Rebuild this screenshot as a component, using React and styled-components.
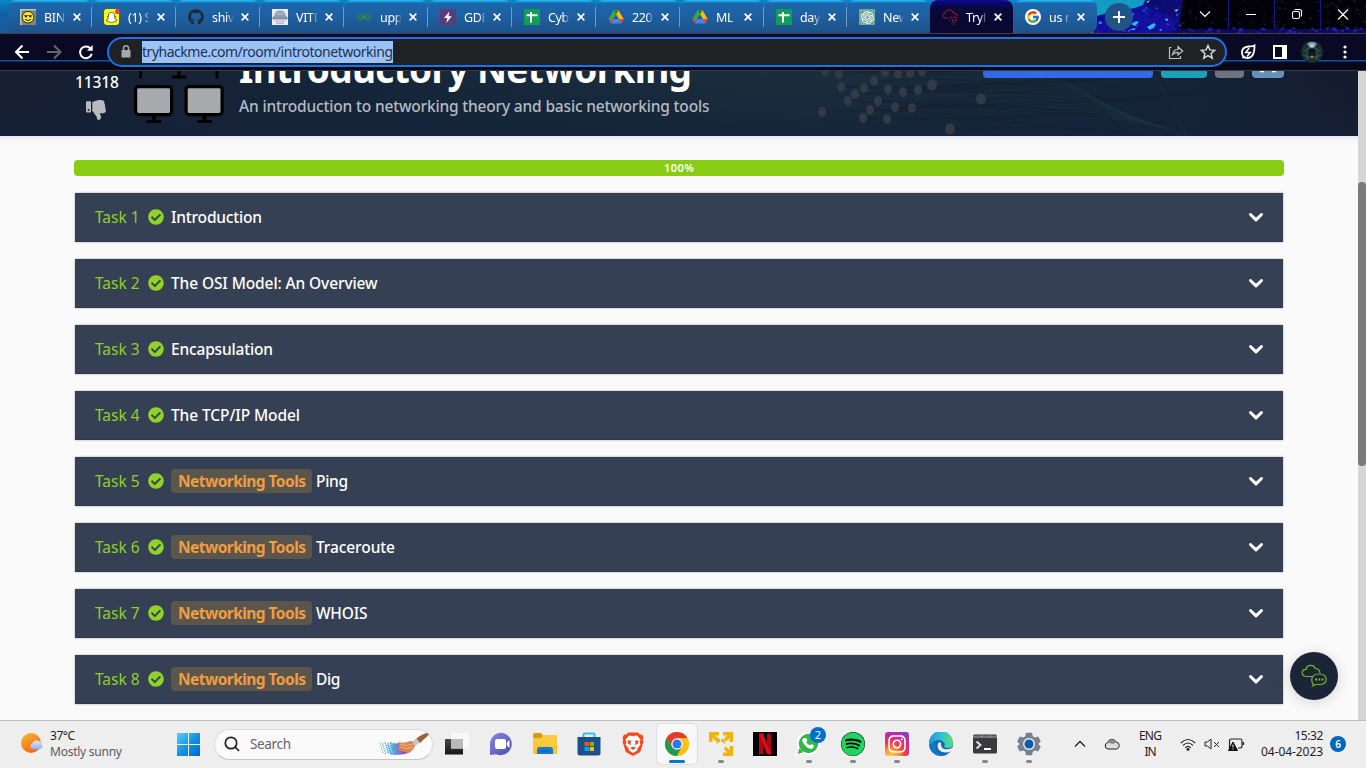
import React, { useLayoutEffect, useRef } from "react";
import styled, { createGlobalStyle, css } from "styled-components";
import { FaGithub, FaSnapchatGhost, FaCheckCircle, FaThumbsDown, FaSpotify, FaInstagram } from "react-icons/fa";
import { FcGoogle } from "react-icons/fc";
import { SiGeeksforgeeks, SiOpenai } from "react-icons/si";

const Global = createGlobalStyle`
  * { box-sizing: border-box; }
  body { margin: 0; overflow: hidden; background: #fafafa; font-family: "Noto Sans", "Open Sans", sans-serif; }
  svg { display: block; flex: none; }
`;

const Screen = styled.div`
  display: flex;
  flex-direction: column;
  width: 1366px;
  height: 768px;
  overflow: hidden;
`;

/* ---------- text fitted to a given width ---------- */
const Fitted = styled.span`
  display: inline-block;
  white-space: pre;
  flex: none;
`;

function Fit({ width, children, ...rest }) {
  const ref = useRef(null);
  useLayoutEffect(() => {
    const el = ref.current;
    el.style.letterSpacing = "0px";
    el.style.width = "auto";
    const natural = el.getBoundingClientRect().width;
    const count = String(children).length;
    el.style.letterSpacing = `${(width - natural) / Math.max(1, count - 1)}px`;
    el.style.width = `${width}px`;
  }, [width, children]);
  return <Fitted ref={ref} {...rest}>{children}</Fitted>;
}

/* ---------- browser tabs ---------- */
const TabStrip = styled.div`
  position: relative;
  display: flex;
  height: 34px;
  padding-left: 8px;
  background: linear-gradient(#0a86c4, #0f62a6 40%, #1a5c9c);
  border-bottom: 1px solid #3c3f4d;
  overflow: hidden;
`;
const Wallpaper = styled.svg`
  position: absolute;
  right: 0;
  top: 0;
`;
const Tab = styled.div`
  position: relative;
  display: flex;
  align-items: center;
  width: ${(p) => p.$w || 84}px;
  height: 33px;
  padding: 1px 0 0 12px;
  border-radius: 8px 8px ${(p) => (p.$edge ? "8px 8px" : "0 0")};
  color: #fff;
  font-size: 12.5px;
  background: linear-gradient(#1fb4ee 0, #1fb4ee 1px, #1b67ad 3px, #1e5f9f 50%, #1d5289);
  ${(p) => p.$active && css`
    border-radius: 8px 8px 0 0;
    background: linear-gradient(#0a1290 0, #08087a 2px, #08083c 8px, #090930);
  `}
`;
const Divider = styled.i`
  width: 1px;
  height: 20px;
  margin-left: auto;
  background: #6f9cc6;
`;
const TabTitle = styled.span`
  width: ${(p) => p.$w}px;
  margin-left: 8px;
  overflow: hidden;
  white-space: nowrap;
  letter-spacing: -0.35px;
  mask-image: linear-gradient(90deg, #000 70%, transparent 105%);
`;
const Close = styled.svg`
  margin-left: 8px;
`;
const Favicon = styled.span`
  display: flex;
  align-items: center;
  justify-content: center;
  flex: none;
  width: 16px;
  height: 16px;
  border-radius: ${(p) => p.$r || 0}px;
  background: ${(p) => p.$bg || "none"};
  color: ${(p) => p.$c || "#fff"};
`;
const NewTab = styled.div`
  position: relative;
  display: flex;
  align-items: center;
  justify-content: center;
  width: 28px;
  height: 28px;
  margin: 3px 0 0 8px;
  border-radius: 50%;
  background: #205489;
`;

const Sheets = () => (
  <Favicon $bg="#0f9d58" $r={1}>
    <svg width="16" height="16"><path d="M2.5 6.3h11M7 3v10.5" stroke="#fff" strokeWidth="2" /></svg>
  </Favicon>
);
const Drive = () => (
  <svg width="16" height="16" viewBox="0 0 16 16">
    <path d="M5.5 1.2h5L5.3 10.1 2.9 14 .5 10.1z" fill="#34a853" />
    <path d="M5.5 1.2h5l5.2 8.9h-5z" fill="#fbbc04" />
    <path d="M5.4 10.1h10.3L13.2 14.6H2.9z" fill="#4285f4" />
    <path d="M5.5 1.2h5L8 5.6z" fill="#188038" />
    <path d="M10.7 10.1h5l-2.5 4.5z" fill="#ea4335" />
    <path d="M.5 10.1h4.9L2.9 14.6z" fill="#ea4335" opacity=".9" />
    <path d="M8 5.8l2.6 4.3H5.5z" fill="#1f5a98" />
  </svg>
);
const Smile = () => (
  <svg width="16" height="16">
    <path d="M0 0h16v16H0z" fill="#c4c3bc" /><path d="M1.500 1.500H16V16H1.500z" fill="#85847c" />
    <circle cx="8" cy="8.200" r="5.800" fill="#f4ec1f" stroke="#222" strokeWidth=".9" />
    <path d="M4.600 6.500h2.400v1.700H5zM9 6.500h2.400v1.700H9.400z" fill="#222" /><path d="M4 6.600h8" stroke="#222" strokeWidth=".6" /><path d="M5 10.300q3 2.600 6 0" stroke="#222" fill="none" />
  </svg>
);
const Snap = () => (
  <svg width="16" height="16">
    <rect width="15" height="16" rx="3" fill="#fffc00" />
    <g transform="translate(2 3)"><FaSnapchatGhost size={11} color="#fff" stroke="#333" strokeWidth={36} /></g>
    <circle cx="13.500" cy="2.500" r="2.500" fill="#f4353f" />
  </svg>
);
const Crest = () => (
  <svg width="16" height="16">
    <path d="M0 0h16v16H0z" fill="#e9ebf2" />
    <path d="M3 7Q3 2 8 2t5 5z" fill="#aeb4c6" stroke="#6d7590" strokeWidth=".8" />
    <path d="M1 8h14v2H1z" fill="#aeb4c6" stroke="#59617b" strokeWidth=".8" /><path d="M3 12.300h10M4 14.300h8M5.500 4v3M8 2.500v5M10.500 4v3" stroke="#9aa1b6" strokeWidth=".8" />
  </svg>
);
const ThmCloud = () => (
  <svg width="16" height="16" fill="none" stroke="#c11125" strokeWidth="1">
    <path d="M6 9H3Q.6 8.500.6 6.500T3 4.200Q3.500.8 7 .8t4.200 3Q15 4 15.300 7" />
    <path d="M8 8.500h2m1 0h4M7 11h1m2 0h2m1 0h2M9.500 13h2m1 0h1M11 15.200h2" strokeWidth="1.300" stroke="#8e1028" />
  </svg>
);

const tabs = [
  ["BIN/", <Smile />],
  ["(1) S", <Snap />],
  ["shiva", <FaGithub size={16} color="#202833" />],
  ["VITB", <Crest />],
  ["uppe", <SiGeeksforgeeks size={14} color="#2f8d46" />],
  ["GDB", <Favicon $bg="#5b3b7c"><svg width="16" height="16"><path d="M9.500 2.500L4 9h3.300L6.300 14l5.500-6.800H8.500z" fill="#fff" /></svg></Favicon>],
  ["Cybe", <Sheets />],
  ["2207", <Drive />],
  ["ML ", <Drive />],
  ["day-", <Sheets />],
  ["New", <Favicon $bg="#74aa9c" $r={1}><SiOpenai size={13} /></Favicon>],
  ["TryH", <ThmCloud />],
  ["us n", <Favicon $bg="#fff" $r={8}><FcGoogle size={14} /></Favicon>],
];
const tabWidth = (i) => (i >= 9 && i <= 11 ? 83 : 84);

/* fixed pseudo random sequence for the water specks of the window theme */
const specks = [];
let seed = 7;
const rnd = () => (seed = (seed * 16807) % 2147483647) / 2147483647;
for (let i = 0; i < 480; i++) {
  const x = rnd() * 277;
  const y = rnd() * 34;
  const dark = x > 93;
  if (dark && y < 28 && i % 3) continue;
  if (!dark && x < 60 && y < 21 - x * 0.26) continue;
  specks.push([x, y, 0.5 + rnd() * (dark ? 1.6 : 1.3), dark ? (y > 28 ? "#2020a8" : "#141420") : ["#1616c8", "#0c0a78", "#1a3fd0", "#0e0d8c", "#2a8fdc"][i % 5]]);
}

function Tabs() {
  return (
    <TabStrip>
      <Wallpaper width="277" height="34">
        <path d="M0 0h277v34H0z" fill="#12109c" />
        <path d="M0 0h56L54 5 46 8 22 12 4 17 0 20z" fill="#109cc4" />
        <path d="M56 0h38v34H82l6-14-30-13z" fill="#0e0c70" />
        <path d="M94 0h183v29H90z" fill="#020208" />
        <path d="M92 29h185v5H90z" fill="#0c0b58" />
        {specks.map(([x, y, r, c], i) => <ellipse key={i} cx={x} cy={y} rx={r} ry={r * 0.7} fill={c} />)}
        <path d="M42 24l5-3 3 1-4 4zM58 27l7-4 2 2-6 5zM40 30l6-2v2z" fill="#3bb4ea" />
        <path d="M54 0l3 2 4-2-2 3zM84 8l2 2 4-1-3 3zM76 20l2-2 1 3zM70 8h2M64 5h2" fill="#7fcbe6" />
        <path d="M139.500 0v29M185.500 0v29M231.500 0v29" stroke="#17178c" />
        <g stroke="#fff" strokeWidth="1.100" fill="none">
          <path d="M111 11.500l5 5 5-5M157 14.500h10M249 9.500l10 10M259 9.500l-10 10" />
          <rect x="203.500" y="11.500" width="7" height="7" rx="1.500" /><path d="M205.500 9.500h5q2 0 2 2v5" />
        </g>
      </Wallpaper>
      {tabs.map(([title, icon], i) => (
        <Tab key={i} $w={tabWidth(i)} $active={i === 11} $edge={i === 12}>
          {icon.type === Favicon ? icon : <Favicon>{icon}</Favicon>}
          <TabTitle $w={i >= 8 ? 20 : 21}>{title}</TabTitle>
          <Close width="8" height="8"><path d="M.7.7l6.600 6.600M7.300.7L.7 7.300" stroke="#fff" strokeWidth="1.700" /></Close>
          {i < 10 && <Divider />}
        </Tab>
      ))}
      <NewTab><svg width="12" height="12"><path d="M6 0v12M0 6h12" stroke="#fff" strokeWidth="2" /></svg></NewTab>
    </TabStrip>
  );
}

/* ---------- toolbar ---------- */
const Toolbar = styled.div`
  display: flex;
  align-items: center;
  height: 37px;
  padding: 0 17px 1px 15px;
  border-bottom: 1px solid #3b3a3c;
  background: linear-gradient(#0a0a28 0, #090822 26px, #0b56a4 26px, #0b56a4 27px, #080818 28px);
`;
const Omnibox = styled.div`
  display: flex;
  align-items: center;
  width: 1120px;
  height: 30px;
  margin-left: 12px;
  padding: 0 9px 0 11px;
  border: 2px solid #1a73e8;
  border-radius: 15px;
  background: #202124;
`;
const Url = styled.div`
  height: 22px;
  margin: 0 auto 0 10px;
  line-height: 21px;
  font-size: 14px;
  color: #23324c;
  background: #9cc3f8;
`;
const Gap = styled.i`
  width: ${(p) => p.$w}px;
  flex: none;
`;

function Bar() {
  return (
    <Toolbar>
      <svg width="80" height="18" fill="none" stroke="#fff" strokeWidth="2">
        <path d="M14 9H1M7.500 2.500L1 9l6.500 6.500" />
        <path d="M32 9h13M39 2.500L45.500 9 39 15.500" stroke="#66666f" />
        <path d="M75.500 5.500A5.900 5.900 0 1 0 76.700 10.800" />
        <path d="M77.700 2v5.700H72z" fill="#fff" stroke="none" />
      </svg>
      <Omnibox>
        <svg width="12" height="14"><path d="M1.500 5h9v7.500h-9z" fill="#a4a7ab" /><path d="M3.500 6V3.300a2.500 2.500 0 0 1 5 0V6" stroke="#a4a7ab" strokeWidth="1.500" fill="none" /></svg>
        <Url><Fit width={251}>tryhackme.com/room/introtonetworking</Fit></Url>
        <svg width="16" height="16" fill="none" stroke="#bdc1c6" strokeWidth="1.200">
          <path d="M3.500 3.500H1.500v11h11V12M4.500 10.500q1-5 5.500-5V2.700l4.700 4.300L10 11V8.300q-3.500 0-5.500 2.200z" />
        </svg>
        <Gap $w={16} />
        <svg width="16" height="16" fill="none" stroke="#d4d7da" strokeWidth="1.500"><path d="M8 1.600l1.900 4.300 4.800.4-3.600 3.200 1.100 4.700L8 11.700l-4.200 2.500 1.100-4.700-3.600-3.200 4.800-.4z" /></svg>
      </Omnibox>
      <Gap $w={13} />
      <svg width="16" height="16" fill="none" stroke="#fff" strokeWidth="1.800">
        <path d="M14.500 1.500Q14.500 14 7.500 14 2 14 2 8.500T8.500 2.500Q13 2.500 14.500 1.500zM2.500 14l2-2" /><path d="M9.200 4L5.700 8.500h4.600L7 12.500" strokeWidth="1.500" />
      </svg>
      <Gap $w={17} />
      <svg width="14" height="14"><path d="M1 1h12v12H1z" fill="none" stroke="#fff" strokeWidth="2" /><path d="M9 1h4v12H9z" fill="#fff" /></svg>
      <Gap $w={14} />
      <svg width="22" height="22">
        <circle cx="11" cy="11" r="10.800" fill="#18302f" />
        <path d="M3 10q8-7 16 0M2 14q9 5 18 0M6 19V9M16 19V9M8 6v12M14 6v12" stroke="#3c5855" fill="none" />
        <path d="M6 2.500q5-3.500 10 0l-2.500 4h-5z" fill="#7f98a2" /><path d="M7.500 8h7v7h-7z" fill="#0a1520" /><circle cx="11" cy="4.500" r="2" fill="#b8cbd3" /><circle cx="11" cy="15.500" r="1.100" fill="#c9a02b" />
      </svg>
      <Gap $w={20} />
      <svg width="4" height="14" fill="#fff"><circle cx="2" cy="2" r="1.600" /><circle cx="2" cy="7" r="1.600" /><circle cx="2" cy="12" r="1.600" /></svg>
    </Toolbar>
  );
}

/* ---------- room page ---------- */
const Viewport = styled.div`
  position: relative;
  display: flex;
  height: 649px;
  background: #fafafa;
`;
const Page = styled.main`
  width: 1358px;
  height: 649px;
  overflow: hidden;
`;
const Track = styled.div`
  width: 8px;
  padding-top: 111px;
  background: #d5d5d5;
`;
const Thumb = styled.div`
  height: 284px;
  border-radius: 4px;
  background: #7a7a7a;
`;
const Hero = styled.header`
  position: relative;
  display: flex;
  align-items: flex-start;
  height: 65px;
  padding-left: 74px;
  overflow: hidden;
  background: linear-gradient(transparent, rgba(19, 32, 56, 0.6)), linear-gradient(90deg, #171e31, #16273a 28%, #1a2f3e 60%, #15263a 82%, #161b2e);
`;
const HeroArt = styled.svg`
  position: absolute;
  left: 0;
  top: 0;
`;
const Votes = styled.div`
  position: relative;
  display: flex;
  flex-direction: column;
  align-items: center;
  width: 46px;
  color: #fff;
  font-size: 15.500px;
  font-weight: 500;
  line-height: 22px;
`;
const Thumbs = styled(FaThumbsDown)`
  margin: 7px 2px 0 0;
  color: #b7b9bd;
`;
const Monitors = styled.svg`
  position: relative;
  margin-left: 13px;
`;
const Heading = styled.div`
  position: relative;
  margin-left: 13px;
`;
const Title = styled.h1`
  height: 40px;
  margin: -22px 0 0;
  line-height: 40px;
  font-size: 37px;
  font-weight: 700;
  color: #fff;
`;
const Subtitle = styled.p`
  margin: 6px 0 0;
  line-height: 22px;
  font-size: 15.5px;
  font-weight: 500;
  color: #b5bac1;
`;
const Actions = styled.div`
  position: relative;
  display: flex;
  gap: 8px;
  margin-left: auto;
  padding-right: 74px;
`;
const Action = styled.div`
  width: ${(p) => p.$w}px;
  height: 7px;
  border-radius: 0 0 4px 4px;
  background: ${(p) => p.$bg};
`;
const Content = styled.section`
  padding: 24px 74px 0;
  box-shadow: inset 0 5px 5px -4px #d9d9ec;
`;
const Progress = styled.div`
  height: 16px;
  border-radius: 4px;
  line-height: 16px;
  text-align: center;
  font-size: 11px;
  font-weight: 600;
  color: #fff;
  background: #88cc14;
`;
const Tasks = styled.div`
  display: flex;
  flex-direction: column;
  gap: 17px;
  padding: 17px 1px 0;
`;
const Task = styled.div`
  display: flex;
  align-items: center;
  height: 49px;
  padding: 0 19px 1px 20px;
  font-size: 15.500px;
  line-height: 22px;
  color: #fff;
  background: #364054;
  box-shadow: 0 0 2px rgba(0, 0, 0, 0.35), inset 0 -1px #2d3750;
`;
const TaskNo = styled.span`
  height: 23px;
  width: 53px;
  color: #90cf28;
`;
const Check = styled(FaCheckCircle)`
  margin: 0 7.500px 0 -0.500px;
  color: #90d328;
`;
const Tag = styled.span`
  height: 24px;
  margin-right: 4px;
  padding: 0 6px 0 7px;
  border-radius: 4px;
  line-height: 24px;
  font-weight: 700;
  color: #f09c42;
  background: #5b564b;
`;
const TaskName = styled.span`
  height: 23px;
  margin-right: auto;
  font-weight: 500;
`;
const Chat = styled.div`
  position: absolute;
  left: 1290px;
  top: 581px;
  display: flex;
  align-items: center;
  justify-content: center;
  width: 48px;
  height: 48px;
  border-radius: 50%;
  background: #1c2538;
  box-shadow: 0 2px 14px rgba(0, 0, 0, 0.16);
`;

const tasks = [
  ["Introduction", 91],
  ["The OSI Model: An Overview", 206.5],
  ["Encapsulation", 102],
  ["The TCP/IP Model", 129],
  ["Ping", 32, true],
  ["Traceroute", 79, true],
  ["WHOIS", 51.5, true],
  ["Dig", 24.5, true],
];
const dots = [[822, 41], [841, 16], [839, 3], [848, 30], [855, 23], [864, 17], [874, 10], [863, 47], [870, 39], [878, 30], [888, 18], [887, 48], [895, 36], [903, 21], [912, 37], [918, 19], [932, 14], [981, 28], [950, 58], [825, 0], [885, 1], [898, 3], [910, 2], [922, 0]];

const Monitor = ({ x, y }) => (
  <g transform={`translate(${x} ${y})`}>
    <path d="M18 30h4v6h-4z" /><path d="M14 36.500h12" stroke="#000" strokeWidth="3" strokeLinecap="round" />
    <rect x="1.600" y="1.600" width="36" height="28" rx="3" fill="#a8a9ad" stroke="#000" strokeWidth="3.200" />
  </g>
);

function Room() {
  return (
    <Viewport>
      <Page>
        <Hero>
          <HeroArt width="1358" height="65" fill="none">
            {dots.map(([x, y], i) => (
              <path key={`l${i}`} d={`M${x} ${y}q${90 + i * 5} ${i % 2 ? 2 : -6} ${220} ${i % 3 ? -8 : 14}`} stroke="#16202f" opacity=".55" strokeWidth="1.500" />
            ))}
            {Array.from({ length: 14 }, (_, i) => (
              <path key={i} d={`M${960 + i * 4} ${i * 5 - 10}Q${1090 + i * 2} ${i * 3 - 4} ${1130 + i * 5} 66`} stroke="#204047" opacity=".28" />
            ))}
            <path d="M1150 0Q1175 30 1186 65" stroke="#24424b" opacity=".4" />
            {dots.map(([x, y], i) => <ellipse key={i} cx={x} cy={y} rx={x > 925 ? 5 : 4} ry={x > 925 ? 5.500 : 5} fill="#343a45" />)}
          </HeroArt>
          <Votes><Fit width={44}>11318</Fit><Thumbs size={20} /></Votes>
          <Monitors width="93" height="54">
            <path d="M7.500 0v6M84 0v6M46 0v5M40 6h12" stroke="#000" strokeWidth="3" strokeLinecap="round" />
            <Monitor x={1} y={14} /><Monitor x={51.500} y={14} />
          </Monitors>
          <Heading>
            <Title><Fit width={453}>Introductory Networking</Fit></Title>
            <Subtitle><Fit width={470.500}>An introduction to networking theory and basic networking tools</Fit></Subtitle>
          </Heading>
          <Actions>
            <Action $w={170} $bg="#336ae8" />
            <Action $w={46} $bg="#19a2b8" />
            <Action $w={29} $bg="#6c757d" />
            <Action $w={32} $bg="#6690bb"><svg width="32" height="3"><path d="M8 .5h4M20 .5h4" stroke="#fff" strokeWidth="1.500" /></svg></Action>
          </Actions>
        </Hero>
        <Content>
          <Progress><Fit width={30}>100%</Fit></Progress>
          <Tasks>
            {tasks.map(([name, width, tool], i) => (
              <Task key={name}>
                <TaskNo><Fit width={44.500}>{`Task ${i + 1}`}</Fit></TaskNo>
                <Check size={16} />
                {tool ? <Tag><Fit width={128}>Networking Tools</Fit></Tag> : null}
                <TaskName><Fit width={width}>{name}</Fit></TaskName>
                <svg width="16" height="12"><path d="M2.500 3.500L8 8.800l5.500-5.300" fill="none" stroke="#fff" strokeWidth="3" strokeLinecap="round" strokeLinejoin="round" /></svg>
              </Task>
            ))}
          </Tasks>
        </Content>
      </Page>
      <Track><Thumb /></Track>
      <Chat>
        <svg width="26" height="24" fill="none" stroke="#76b51c" strokeWidth="1.200">
          <path d="M11 12.500H5Q1.200 12 1.200 8.800T5 5.400Q5.500 1.300 9.600 1.300T14 4.500Q18.500 4.500 19 9" />
          <path d="M12.500 20.500Q10.700 18.800 10.700 15.800 11 10 18 10t7.200 5.500Q25 20.500 18 20.500h-3l-3.300 1.500z" />
          <path d="M14 15.500h2M17.300 15.500h2M20.600 15.500h2" strokeWidth="2" />
        </svg>
      </Chat>
    </Viewport>
  );
}

/* ---------- taskbar ---------- */
const Taskbar = styled.footer`
  position: relative;
  display: flex;
  align-items: center;
  height: 48px;
  padding: 0 0 1px 20px;
  border-top: 1px solid #bdbdbd;
  background: #eeeeee;
  color: #1d1d1d;
  font-size: 12px;
`;
const Weather = styled.div`
  width: 127px;
  margin-left: 7px;
  line-height: 16px;
  color: #5c5c5c;
  & > b { display: block; font-weight: 400; color: #1d1d1d; }
`;
const Search = styled.div`
  display: flex;
  align-items: center;
  width: 219px;
  height: 31px;
  margin: 0 2px 0 14px;
  padding: 0 2px 0 9px;
  border: 1px solid #dcdcdc;
  border-bottom-color: #c4c4c4;
  border-radius: 16px;
  background: #fafafa;
  color: #636363;
  font-size: 13.500px;
`;
const SearchLabel = styled.span`
  margin: 0 auto 0 10px;
`;
const AppCell = styled.div`
  position: relative;
  display: flex;
  align-items: center;
  justify-content: center;
  width: 40px;
  height: 40px;
  margin: 0 2px;
  border-radius: 5px;
  ${(p) => p.$active && css`background: #f8f8f8; box-shadow: 0 0 0 1px #e0e0e0;`}
`;
const Underline = styled.i`
  position: absolute;
  bottom: 1px;
  left: ${(p) => (p.$active ? 12 : 17)}px;
  width: ${(p) => (p.$active ? 16 : 6)}px;
  height: 3px;
  border-radius: 2px;
  background: ${(p) => (p.$active ? "#0078d4" : "#888")};
`;
const Count = styled.span`
  position: absolute;
  left: 21px;
  top: 3px;
  width: 16px;
  height: 16px;
  border-radius: 50%;
  text-align: center;
  line-height: 15px;
  font-size: 11px;
  color: #fff;
  background: #0070cc;
`;
const Insta = styled.span`
  display: flex;
  align-items: center;
  justify-content: center;
  width: 24px;
  height: 24px;
  border-radius: 3px;
  color: #fff;
  background: radial-gradient(circle at 25% 105%, #ffd34e 0, #fb9a3c 25%, #f0433f 45%, #d0279d 68%, #6a45d0 100%);
`;
const Spot = styled.span`
  border-radius: 50%;
  background: #000;
  color: #1ed760;
`;
const Slot = styled.div`
  display: flex;
  justify-content: center;
  width: ${(p) => p.$w}px;
  margin-left: ${(p) => p.$ml || 0}px;
  text-align: center;
  line-height: 16px;
  font-size: 12px;
`;
const Clock = styled.div`
  width: 71px;
  margin-left: 4px;
  text-align: right;
  line-height: 16px;
  white-space: nowrap;
`;
const Notice = styled.div`
  width: 16px;
  height: 16px;
  margin-left: 7px;
  border-radius: 50%;
  text-align: center;
  line-height: 16px;
  font-size: 10px;
  font-weight: 600;
  color: #fff;
  background: #0067c0;
`;

const Sun = () => (
  <svg width="23" height="22">
    <defs>
      <linearGradient id="sun" x1="0" y1="0" x2=".6" y2="1"><stop stopColor="#f7b92f" /><stop offset="1" stopColor="#ef6a16" /></linearGradient>
      <linearGradient id="cl" x2="0" y2="1"><stop stopColor="#dbe7fb" /><stop offset="1" stopColor="#8faee8" /></linearGradient>
    </defs>
    <circle cx="11" cy="10" r="10" fill="url(#sun)" />
    <path d="M12 16.300a3.500 3.500 0 0 1 .5-6.200 4.500 4.500 0 0 1 7-1.500 4 4 0 0 1 0 7.700z" fill="url(#cl)" />
  </svg>
);
const Start = () => (
  <svg width="23" height="23">
    <defs><linearGradient id="st" gradientUnits="userSpaceOnUse" x1="0" y1="0" x2="23" y2="23"><stop stopColor="#54d1fa" /><stop offset=".5" stopColor="#1593e2" /><stop offset="1" stopColor="#0067c8" /></linearGradient></defs>
    <path d="M0 0h11v11H0zM12 0h11v11H12zM0 12h11v11H0zM12 12h11v11H12z" fill="url(#st)" />
  </svg>
);
const Brush = () => (
  <svg width="52" height="24">
    <defs><linearGradient id="paint"><stop stopColor="#5fb6e6" stopOpacity="0" /><stop offset=".35" stopColor="#6f8fe4" /><stop offset=".7" stopColor="#9b45b8" /><stop offset="1" stopColor="#e8a2c8" /></linearGradient></defs>
    <path d="M8 15q7-4 14-4l12 8q-4 4-22 4z" fill="url(#paint)" />
    <g fill="#45a9d2">{Array.from({ length: 30 }, (_, i) => <circle key={i} cx={2 + (i % 6) * 2.700 + Math.floor(i / 6) * 0.7} cy={11 + Math.floor(i / 6) * 2.300 + (i % 2)} r={0.6 + (i % 6) * 0.12} />)}</g>
    <path d="M20 10q7 2 12-1 5 0 5 5-2 6-9 6-8-1-8-4 2-2 0-6z" fill="#d8854f" /><path d="M22 12q6 3 13 0M23 15q6 3 12 0" stroke="#f0b488" fill="none" />
    <path d="M34 9.500l5-3.500 3 4.500-5 3.500z" fill="#c9c6c9" /><path d="M38.500 6.500q6-5 11-5.500 2.500 1-1 4-3 2.500-6.500 6z" fill="#956335" />
  </svg>
);
const Chrome = () => (
  <svg width="24" height="24" viewBox="0 0 24 24">
    <circle cx="12" cy="12" r="12" fill="#fbc116" />
    <path d="M12 6.300h10.500A12 12 0 0 0 1.600 6L6.900 15z" fill="#e33b2e" />
    <path d="M1.600 6A12 12 0 0 0 12 24l5-9H7z" fill="#229a4d" />
    <path d="M12 6.300h10.500A12 12 0 0 1 12 24l5-9z" fill="#fbc116" />
    <circle cx="12" cy="12" r="5.700" fill="#fff" /><circle cx="12" cy="12" r="4.500" fill="#2d78ea" />
  </svg>
);

const apps = [
  { icon: <svg width="24" height="24"><defs><linearGradient id="tv" x2="0" y2="1"><stop stopColor="#484848" /><stop offset="1" stopColor="#161616" /></linearGradient></defs><path d="M0 7h18v15.500H0z" fill="url(#tv)" /><path d="M6 1h18v15.500H6z" fill="#f8f8f8" /><path d="M6 7h12v9.500H6z" fill="#b9b9b9" /></svg> },
  { icon: <svg width="24" height="24"><defs><linearGradient id="tm" x2="1" y2="1"><stop stopColor="#8588e6" /><stop offset="1" stopColor="#4c4ba9" /></linearGradient></defs><path d="M12.500.8A11.200 11.200 0 1 1 7 22.200L1 23V12A11.300 11.300 0 0 1 12.500.8z" fill="url(#tm)" /><rect x="6" y="7" width="11" height="10" rx="2" fill="#fff" /><path d="M17.800 10.500l2.700-2.500v8l-2.700-2.500z" fill="#fff" /></svg> },
  { icon: <svg width="24" height="24"><path d="M0 2.500Q0 1 1.500 1H8l2.500 3.500L8 8H0z" fill="#d89a12" /><path d="M0 6h8l2.500-3H23q1 0 1 1v18H0z" fill="#fccb3c" /><path d="M0 14h24v8H0z" fill="#fdbf24" opacity=".6" /><path d="M4 22v-4q0-3 3-3h10q3 0 3 3v4z" fill="#1579cf" /><path d="M7.500 19h9" stroke="#0b5da5" /></svg> },
  { icon: <svg width="24" height="24"><path d="M6.500 6V2.500q0-1 1-1h9q1 0 1 1V6" fill="none" stroke="#35bff0" strokeWidth="2" /><path d="M.5 5h23v16q0 2.500-2.500 2.500H3Q.5 23.500.5 21z" fill="#1d5089" /><path d="M7.500 10H12v4H7.500z" fill="#f25022" /><path d="M12.800 10H17v4h-4.200z" fill="#7fba00" /><path d="M7.500 14.900H12V19H7.500z" fill="#00a4ef" /><path d="M12.800 14.900H17V19h-4.200z" fill="#ffb900" /></svg> },
  { icon: <svg width="22" height="24"><path d="M6 .5h10l2 2.300 2-.2 1.500 3.200-.8 2 .8 1.700L18.200 20 11 24l-7.200-4L.5 9.500l.8-1.700-.8-2L2 2.600l2 .2z" fill="#fb4520" /><path d="M11 4l4-.5 3.500 4-.9 3 .9 2-3 4-.5 2L11 21l-4-2.500-.5-2-3-4 .9-2-.9-3L7 3.500z" fill="#fff" /><path d="M5.500 8.200l3.700.5-.8 2.200 1 2.200-3.200-1zM16.500 8.200l-3.700.5.8 2.200-1 2.200 3.200-1zM8 15.800l3-1 3 1-3 2.200z" fill="#fb4520" /></svg> },
  { icon: <Chrome />, active: true },
  { icon: <svg width="24" height="24" fill="#f0b40c"><path d="M0 0h10v3.500H6L9.500 7 7 9.500 3.500 6v4H0zM14 0h10v10h-3.500V6L17 9.500 14.500 7 18 3.500h-4zM24 14v10H14v-3.500h4L14.500 17l2.500-2.500L20.500 18v-4zM7.500 5.500h2V7H11v3H9.500v1.500h-2zM16 5.500h-1.500V7H12v3h2.500v1.500H16z" /></svg>, open: true },
  { icon: <svg width="24" height="24"><path d="M0 0h24v24H0z" fill="#000" /><path d="M6 1.500h4V22l-4 .5zM14 1.500h4v21l-4-.5z" fill="#b1060f" /><path d="M6 1.500h4l8 21-4-.5z" fill="#e50914" /></svg> },
  { icon: <svg width="30" height="24"><circle cx="14.500" cy="11.500" r="11.800" fill="#fff" /><path d="M1 24l2-7.500 6 6z" fill="#fff" /><circle cx="14.500" cy="11.500" r="9.700" fill="#35b64b" /><path d="M3.500 22l2-6 4 4.200z" fill="#35b64b" /><path d="M10.500 6l2 .3.800 2.500-1 1.400q1.300 2.600 3.700 3.400l1.300-1.500 2.500 1.300q.2 3-2.800 3.300-3.500 0-6.500-4t-2-5.500q.8-1.200 2-1.200z" fill="#fff" /></svg>, open: true, count: 2 },
  { icon: <Spot><FaSpotify size={24} /></Spot>, open: true },
  { icon: <Insta><FaInstagram size={20} /></Insta>, open: true },
  { icon: <svg width="24" height="24"><defs><linearGradient id="ed"><stop stopColor="#2297dd" /><stop offset=".5" stopColor="#2fc0d8" /><stop offset="1" stopColor="#5fdb70" /></linearGradient></defs><circle cx="12" cy="12" r="12" fill="#1068b8" /><path d="M0 11A12 12 0 0 1 24 11q0 5-5 5-4-.2-4-2 1.500-1 0-3.500Q12 7 7 8.500T0 14z" fill="url(#ed)" /><path d="M10 10Q7 14 10 18q5 4.500 12.500 1.200L24 15q-3 3-9 2-3.500-2-3-6z" fill="#eee" /><path d="M8 10q-3 6 1 10 3 3 7 3Q8 25 4 20T2 12q2-3 6-2z" fill="#1276c7" /></svg> },
  { icon: <svg width="24" height="20"><rect width="24" height="19" y=".5" rx="1.500" fill="#3a3a3c" /><path d="M0 3V1.500h24V4H0z" fill="#77777a" /><path d="M9 1v3M17 1v3" stroke="#999" /><path d="M3.500 7.500L7.500 11l-4 3.500" fill="none" stroke="#ddd" strokeWidth="2" /><path d="M11 15h7" stroke="#fff" strokeWidth="2" /></svg>, open: true },
  { icon: <svg width="24" height="24" viewBox="0 0 24 24"><path d="M9 .8h6l.8 3.400 2 1.200 3.400-1 2.600 4.800-2.400 2.800 2.400 2.800-2.600 4.800-3.400-1-2 1.200-.8 3.400H9l-.8-3.400-2-1.200-3.400 1-2.600-4.800L2.600 12 .2 9.200l2.600-4.800 3.400 1 2-1.200z" fill="#76828e" /><circle cx="12" cy="12" r="6" fill="#e9edf0" /><circle cx="12" cy="12" r="4.500" fill="#0b5cab" /></svg>, open: true },
];

function SystemBar() {
  return (
    <Taskbar>
      <Sun />
      <Weather><b><Fit width={25}>37°C</Fit></b><Fit width={72}>Mostly sunny</Fit></Weather>
      <Start />
      <Search>
        <svg width="16" height="16" fill="none" stroke="#222" strokeWidth="1.700"><circle cx="7" cy="7" r="5.700" /><path d="M11 11l4 4" /></svg>
        <SearchLabel><Fit width={41}>Search</Fit></SearchLabel>
        <Brush />
      </Search>
      {apps.map((a, i) => (
        <AppCell key={i} $active={a.active}>
          {a.icon}
          {(a.active || a.open) && <Underline $active={a.active} />}
          {a.count && <Count>{a.count}</Count>}
        </AppCell>
      ))}
      <Slot $w={32} $ml={13}><svg width="12" height="8"><path d="M1 6.500l5-5 5 5" fill="none" stroke="#222" strokeWidth="1.300" /></svg></Slot>
      <Slot $w={32}><svg width="17" height="12"><path d="M4 11A3.300 3.300 0 0 1 3.500 4.600 4.700 4.700 0 0 1 12.200 4 3.600 3.600 0 0 1 12.700 11z" fill="#ddd" stroke="#222" /><path d="M3.500 5.500Q5 1.500 8 1.500t4 3L9 6 5 5z" fill="#8c8c8c" /></svg></Slot>
      <Slot $w={44}><div><Fit width={23}>ENG</Fit><br /><Fit width={12}>IN</Fit></div></Slot>
      <Slot $w={24} $ml={4}><svg width="16" height="13" fill="none" stroke="#222" strokeWidth="1.100"><path d="M.8 5q7.200-7 14.400 0M3 7.500q5-5 10 0M5.200 9.800q2.800-2.800 5.600 0" /><circle cx="8" cy="11.300" r="1" fill="#222" /></svg></Slot>
      <Slot $w={24}><svg width="16" height="12" fill="none" stroke="#222"><path d="M1 4h2.500L7 1v10L3.500 8H1zM10 4l5 5M15 4l-5 5" /></svg></Slot>
      <Slot $w={24}><svg width="17" height="14" fill="none" stroke="#222"><path d="M1.500 12V4q0-2 2-2h9q1.500 0 1.500 2v5q0 2-1.500 2H10M15.500 5v3" strokeWidth="1.200" /><path d="M5 5l4.500 8.500H.5z" fill="#111" stroke="#111" /><path d="M5 7.500v3M5 11.500v1" stroke="#fff" /></svg></Slot>
      <Clock><Fit width={29}>15:32</Fit><br /><Fit width={62}>04-04-2023</Fit></Clock>
      <Notice>6</Notice>
    </Taskbar>
  );
}

export default function App() {
  return (
    <Screen>
      <Global />
      <Tabs />
      <Bar />
      <Room />
      <SystemBar />
    </Screen>
  );
}
